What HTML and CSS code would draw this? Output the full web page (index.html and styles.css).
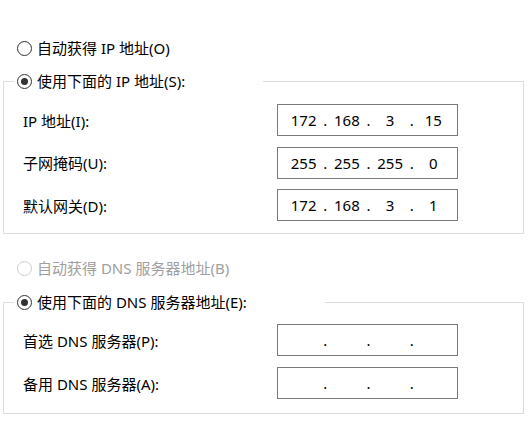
FILE: index.html
```html
<!DOCTYPE html>
<html lang="zh-CN">

<head>
  <meta charset="UTF-8">
  <title>Internet 协议版本 4 (TCP/IPv4) 属性</title>
  <link rel="stylesheet" href="styles.css">
</head>

<body>
  <div class="page">
    <div class="option">
      <span class="radio"></span>
      <span>自动获得 IP 地址(O)</span>
    </div>

    <fieldset class="group">
      <legend class="group-legend">
        <div class="option">
          <span class="radio checked"></span>
          <span>使用下面的 IP 地址(S):</span>
        </div>
      </legend>
      <div class="fields">
        <div class="field-row">
          <span class="field-label">IP 地址(I):</span>
          <div class="ip-box">
            <span class="ip-part">172</span><span class="ip-dot"><span>.</span></span>
            <span class="ip-part">168</span><span class="ip-dot"><span>.</span></span>
            <span class="ip-part">3</span><span class="ip-dot"><span>.</span></span>
            <span class="ip-part">15</span>
          </div>
        </div>
        <div class="field-row">
          <span class="field-label">子网掩码(U):</span>
          <div class="ip-box">
            <span class="ip-part">255</span><span class="ip-dot"><span>.</span></span>
            <span class="ip-part">255</span><span class="ip-dot"><span>.</span></span>
            <span class="ip-part">255</span><span class="ip-dot"><span>.</span></span>
            <span class="ip-part">0</span>
          </div>
        </div>
        <div class="field-row">
          <span class="field-label">默认网关(D):</span>
          <div class="ip-box">
            <span class="ip-part">172</span><span class="ip-dot"><span>.</span></span>
            <span class="ip-part">168</span><span class="ip-dot"><span>.</span></span>
            <span class="ip-part">3</span><span class="ip-dot"><span>.</span></span>
            <span class="ip-part">1</span>
          </div>
        </div>
      </div>
    </fieldset>

    <div class="option option-gap disabled">
      <span class="radio"></span>
      <span>自动获得 DNS 服务器地址(B)</span>
    </div>

    <fieldset class="group group-dns">
      <legend class="group-legend">
        <div class="option">
          <span class="radio checked"></span>
          <span>使用下面的 DNS 服务器地址(E):</span>
        </div>
      </legend>
      <div class="fields">
        <div class="field-row">
          <span class="field-label">首选 DNS 服务器(P):</span>
          <div class="ip-box">
            <span class="ip-part"></span><span class="ip-dot"><span>.</span></span>
            <span class="ip-part"></span><span class="ip-dot"><span>.</span></span>
            <span class="ip-part"></span><span class="ip-dot"><span>.</span></span>
            <span class="ip-part"></span>
          </div>
        </div>
        <div class="field-row">
          <span class="field-label">备用 DNS 服务器(A):</span>
          <div class="ip-box">
            <span class="ip-part"></span><span class="ip-dot"><span>.</span></span>
            <span class="ip-part"></span><span class="ip-dot"><span>.</span></span>
            <span class="ip-part"></span><span class="ip-dot"><span>.</span></span>
            <span class="ip-part"></span>
          </div>
        </div>
      </div>
    </fieldset>
  </div>
</body>

</html>
```

FILE: styles.css
```css
* {
  margin: 0;
  padding: 0;
  box-sizing: border-box;
}

body {
  font-family: "Noto Sans", "Noto Sans CJK SC", sans-serif;
  font-size: 15px;
  color: #000;
  background-color: #fff;
}

.page {
  padding: 38px 4px 0 3px;
}

.option {
  display: flex;
  align-items: center;
  gap: 5px;
  height: 20px;
  line-height: 20px;
  padding-left: 14px;
  white-space: nowrap;
}

.radio {
  width: 15px;
  height: 15px;
  border: 1px solid #333;
  border-radius: 50%;
  display: flex;
  align-items: center;
  justify-content: center;
  flex-shrink: 0;
}

.radio.checked::after {
  content: "";
  width: 7px;
  height: 7px;
  border-radius: 50%;
  background-color: #333;
}

.option.disabled {
  color: #a0a0a0;
}

.option.disabled .radio {
  border-color: #cccccc;
}

.option-gap {
  margin-top: 24px;
}

.group {
  border: 1px solid #dcdcdc;
  margin-top: 13px;
  padding: 0;
  min-width: 0;
}

.group-legend {
  margin-left: 10px;
  padding: 0 78px 0 0;
}

.group-legend .option {
  padding-left: 3px;
}

.group-dns {
  margin-top: 14px;
}

.fields {
  display: flex;
  flex-direction: column;
  gap: 10.5px;
  padding: 13px 0 12px 19px;
}

.group-dns .fields {
  gap: 11px;
  padding-top: 12px;
  padding-bottom: 14px;
}

.field-row {
  display: grid;
  grid-template-columns: 254px 181px;
  align-items: center;
  height: 32px;
}

.field-label {
  white-space: nowrap;
}

.ip-box {
  display: flex;
  align-items: center;
  height: 32px;
  border: 1px solid #7a7a7a;
  padding: 0 2px 0 4px;
}

.ip-part {
  flex: 1;
  text-align: center;
}

.ip-dot {
  width: 0;
  display: flex;
  justify-content: center;
}
```
